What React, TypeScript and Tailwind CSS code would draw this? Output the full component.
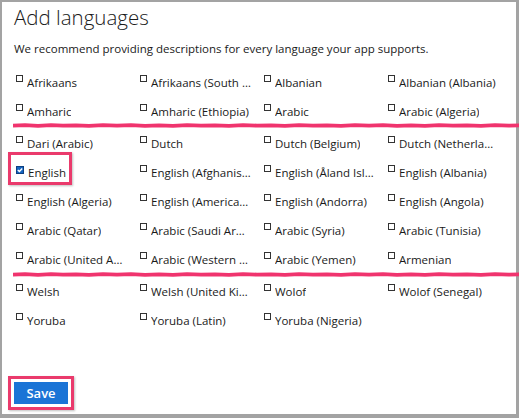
import React from "react";

const sections: string[][] = [
  ["Afrikaans", "Afrikaans (South Africa)", "Albanian", "Albanian (Albania)", "Amharic", "Amharic (Ethiopia)", "Arabic", "Arabic (Algeria)"],
  [
    "Dari (Arabic)", "Dutch", "Dutch (Belgium)", "Dutch (Netherlands)",
    "English", "English (Afghanistan)", "English (Åland Islands)", "English (Albania)",
    "English (Algeria)", "English (American Samoa)", "English (Andorra)", "English (Angola)",
    "Arabic (Qatar)", "Arabic (Saudi Arabia)", "Arabic (Syria)", "Arabic (Tunisia)",
    "Arabic (United Arab Emirates)", "Arabic (Western Sahara)", "Arabic (Yemen)", "Armenian",
  ],
  ["Welsh", "Welsh (United Kingdom)", "Wolof", "Wolof (Senegal)", "Yoruba", "Yoruba (Latin)", "Yoruba (Nigeria)"],
];

// rough torn-edge line used as a "rows cut here" marker
const TornLine = () => (
  <div className="-ml-[2px] w-[519px] h-[5px]">
    <svg width="519" height="5" viewBox="0 0 519 5">
      <path
        d="M0 2.6 L12 2.2 L25 2.8 L38 2.1 L50 2.7 L63 2.3 L76 2.9 L90 2.2 L104 2.6 L118 2.1 L132 2.8 L146 2.4 L160 2.9 L174 2.2 L188 2.7 L202 2.3 L216 2.8 L230 2.1 L244 2.6 L258 2.3 L272 2.9 L286 2.2 L300 2.7 L314 2.4 L328 2.8 L342 2.2 L356 2.6 L370 2.1 L384 2.8 L398 2.3 L412 2.9 L426 2.2 L440 2.7 L454 2.3 L468 2.8 L482 2.2 L496 2.7 L508 2.3 L519 2.6"
        fill="none"
        stroke="#f0346e"
        strokeWidth="3.8"
        strokeLinejoin="round"
      />
    </svg>
  </div>
);

const Box = ({ checked }: { checked?: boolean }) =>
  checked ? (
    <svg width="8" height="8" viewBox="0 0 8 8" className="shrink-0 mt-[7px]">
      <rect x="0.5" y="0.5" width="7" height="7" fill="#1565c0" stroke="#0d3f80" />
      <path d="M1.8 3.9 L3.4 5.4 L6.2 2.4" fill="none" stroke="#fff" strokeWidth="1.4" />
    </svg>
  ) : (
    <span className="shrink-0 mt-[6px] w-[7px] h-[7px] border border-[#333]" />
  );

const Item = ({ label }: { label: string }) => {
  const checked = label === "English";
  return (
    <div className="relative h-[29px] flex items-start gap-[4px] pl-[1px]">
      {checked && (
        <span className="absolute -left-[7px] top-[-7px] w-[64px] h-[33px] border-[3px] border-[#ea3a6c] shadow-[1px_1px_2px_rgba(0,0,0,0.25)]" />
      )}
      <Box checked={checked} />
      <span className="mt-[5px] max-w-[100px] truncate leading-[18px]">{label}</span>
    </div>
  );
};

export default function App() {
  return (
    <div
      className="w-[519px] h-[418px] flex flex-col bg-white border-l-2 border-t-2 border-r-[3px] border-b-4 border-[#a3a3a3] text-[#1a1a1a] text-[11.5px]"
      style={{ fontFamily: '"Open Sans", "Noto Sans", sans-serif' }}
    >
      <h1 className="pl-[12px] pt-[1px] text-[20.5px] font-light leading-[28px]">Add languages</h1>
      <p className="pl-[12px] mt-[9px] leading-[18px]">
        We recommend providing descriptions for every language your app supports.
      </p>

      <div className="mt-[11px] px-[13px]">
        <div className="grid grid-cols-[124px_124px_124px_124px]">
          {sections[0].map((l) => (
            <Item key={l} label={l} />
          ))}
        </div>
        <div className="-mt-[4px]">
          <TornLine />
        </div>
        <div className="mt-[2px] grid grid-cols-[124px_124px_124px_124px]">
          {sections[1].map((l) => (
            <Item key={l} label={l} />
          ))}
        </div>
        <div className="-mt-[3px]">
          <TornLine />
        </div>
        <div className="mt-[1px] grid grid-cols-[124px_124px_124px_124px]">
          {sections[2].map((l) => (
            <Item key={l} label={l} />
          ))}
        </div>
      </div>

      <div className="mt-auto mb-[4px] ml-[6px] self-start p-[3px] border-[3px] border-[#ea3a6c] shadow-[1px_1px_2px_rgba(0,0,0,0.25)]">
        <button className="block w-[54px] h-[22px] bg-[#1a74d6] text-white text-[13px] font-semibold leading-none">
          Save
        </button>
      </div>
    </div>
  );
}
